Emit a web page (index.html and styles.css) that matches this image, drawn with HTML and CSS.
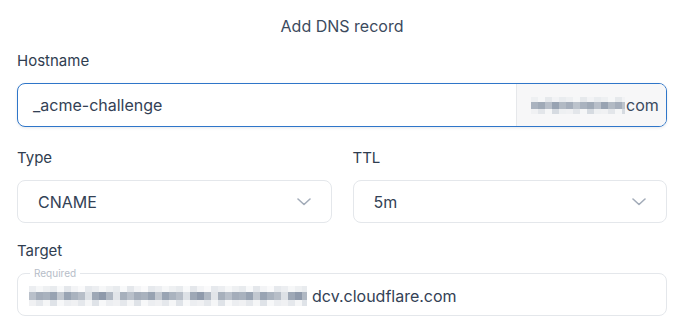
FILE: index.html
```html
<!DOCTYPE html>
<html>
<head>
<meta charset="utf-8">
<link rel="stylesheet" href="styles.css">
</head>
<body>
<div class="dialog">
  <h1 class="title">Add DNS record</h1>

  <div class="field">
    <label class="label">Hostname</label>
    <div class="input host">
      <span class="value">_acme-challenge</span>
      <span class="suffix"><span class="mosaic m-host"></span>com</span>
    </div>
  </div>

  <div class="row">
    <div class="field">
      <label class="label">Type</label>
      <div class="input select">
        <span class="value">CNAME</span>
        <svg class="chev" width="14" height="8" viewBox="0 0 14 8"><path d="M1 1l6 5.5L13 1" fill="none" stroke="#a3acb9" stroke-width="1.6" stroke-linecap="round" stroke-linejoin="round"/></svg>
      </div>
    </div>
    <div class="field">
      <label class="label">TTL</label>
      <div class="input select">
        <span class="value">5m</span>
        <svg class="chev" width="14" height="8" viewBox="0 0 14 8"><path d="M1 1l6 5.5L13 1" fill="none" stroke="#a3acb9" stroke-width="1.6" stroke-linecap="round" stroke-linejoin="round"/></svg>
      </div>
    </div>
  </div>

  <div class="field target-field">
    <label class="label">Target</label>
    <div class="input target">
      <span class="legend">Required</span>
      <span class="mosaic m-target"></span><span class="value">dcv.cloudflare.com</span>
    </div>
  </div>
</div>
</body>
</html>
```

FILE: styles.css
```css
* { box-sizing: border-box; }
html, body { margin: 0; padding: 0; background: #ffffff; }
body {
  font-family: Inter, "Noto Sans", "DejaVu Sans", sans-serif;
  color: #334155;
}
.dialog {
  padding: 0 20px 0 17px;
  width: 687px;
}
.title {
  margin: 0;
  height: 52px;
  line-height: 52px;
  text-align: center;
  font-size: 16px;
  font-weight: 400;
  color: #3b4a5d;
}
.field { display: flex; flex-direction: column; }
.label {
  display: block;
  margin-top: -1px;
  height: 20px;
  line-height: 20px;
  font-size: 15px;
  color: #2f3d50;
  margin-bottom: 12px;
}
.input {
  display: flex;
  align-items: center;
  border: 1px solid #e4e7eb;
  border-radius: 8px;
  background: #fff;
  font-size: 16px;
  color: #334155;
}
.host {
  height: 44px;
  border-color: #2f76c9;
  box-shadow: 0 1px 3px rgba(15, 35, 70, 0.10);
  overflow: hidden;
}
.host .value { flex: 1; padding-left: 15px; }
.suffix {
  align-self: stretch;
  width: 150px;
  display: flex;
  align-items: center;
  padding-left: 14px;
  background: #f7f7f8;
  border-left: 1px solid #e6e8eb;
  color: #3a4a5e;
}
.row {
  display: grid;
  grid-template-columns: 1fr 1fr;
  column-gap: 21px;
  margin-top: 22px;
}
.select {
  height: 43px;
  padding: 0 20px 0 20px;
  justify-content: space-between;
}
.target-field { margin-top: 19px; }
.target {
  position: relative;
  height: 43px;
  padding-left: 11px;
  padding-top: 2px;
}
.legend {
  position: absolute;
  left: 12px;
  top: -7px;
  padding: 0 4px;
  background: #fff;
  font-size: 10px;
  line-height: 12px;
  color: #b6bdc8;
}
.mosaic {
  display: inline-block;
  flex: none;
}
.m-host {
  width: 94px;
  height: 17px;
  margin-right: 1px;
  background:
    repeating-linear-gradient(90deg, #eef0f2 0 7px, #f6f7f8 7px 14px, #e6e9ec 14px 21px, #f2f3f5 21px 28px, #e9ecef 28px 35px) 0 0 / 100% 5px no-repeat,
    repeating-linear-gradient(90deg, #aab3bf 0 7px, #a0aab7 7px 14px, #b8bfc9 14px 21px, #98a3b2 21px 28px, #b2bac4 28px 35px, #a5aebb 35px 42px, #bcc3cc 42px 49px) 0 5px / 100% 7px no-repeat,
    repeating-linear-gradient(90deg, #f0f1f3 0 7px, #e3e6ea 7px 14px, #f5f6f7 14px 21px, #d6dbe1 21px 28px, #eef0f2 28px 35px) 0 12px / 100% 5px no-repeat;
}
.m-target {
  width: 278px;
  height: 20px;
  margin-right: 5px;
  background:
    repeating-linear-gradient(90deg, #eceef1 0 7px, #f6f7f8 7px 14px, #eef0f2 14px 21px, #e8ebee 21px 28px, #f8f9fa 28px 35px, #e4e7eb 35px 42px, #f3f4f6 42px 49px, #fafafb 49px 56px, #e6e9ed 56px 63px) 0 0 / 100% 6px no-repeat,
    repeating-linear-gradient(90deg, #b9c0ca 0 7px, #a4adba 7px 14px, #a9b2be 14px 21px, #98a3b2 21px 28px, #c2c8d0 28px 35px, #99a4b3 35px 42px, #aab3bf 42px 49px, #b7bec8 49px 56px, #dde1e6 56px 63px, #9ea8b6 63px 70px, #8f9aab 70px 77px, #b0b8c3 77px 84px, #e2e5e9 84px 91px, #a7b0bc 91px 98px) 0 6px / 100% 8px no-repeat,
    repeating-linear-gradient(90deg, #f0f1f3 0 7px, #e5e8ec 7px 14px, #f5f6f7 14px 21px, #dfe3e8 21px 28px, #f7f8f9 28px 35px, #eceef1 35px 42px) 0 14px / 100% 6px no-repeat;
}
.chev { display: block; }
```
